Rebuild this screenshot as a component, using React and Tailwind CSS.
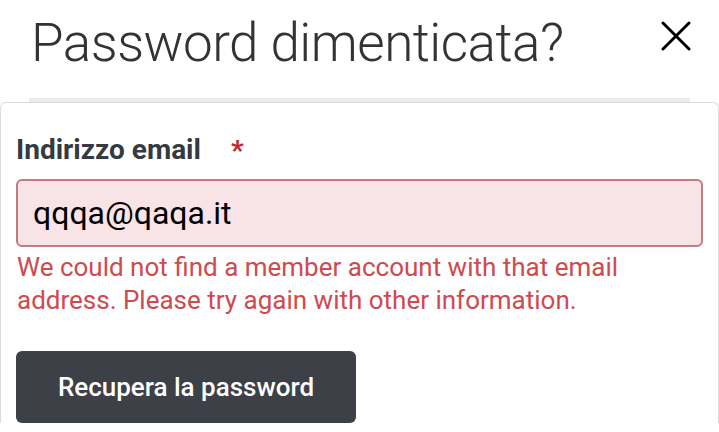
const CloseIcon = () => (
  <svg width="30" height="30" viewBox="0 0 30 30" fill="none" stroke="currentColor" strokeWidth="3" strokeLinecap="round">
    <path d="M2 2 L28 28 M28 2 L2 28" />
  </svg>
);

const App = () => {
  return (
    <div className="h-[432px] w-[719px] overflow-hidden bg-white font-['Roboto',sans-serif]">
      <div className="flex items-start justify-between pl-[31px] pr-[28px] pt-[12px]">
        <h1 className="text-[53px] font-light leading-[62px] tracking-[-0.5px] text-[#333]">Password dimenticata?</h1>
        <button className="mt-[9px] text-black">
          <CloseIcon />
        </button>
      </div>

      <div className="mx-[29px] mt-[24px] h-[4px] bg-[#ececec]" />

      <div className="rounded-t-[6px] border border-b-0 border-[#dcdcdc] px-[15px] pt-[28px]">
        <label className="flex items-center text-[28px] font-bold leading-[36px] text-[#343a40]">
          Indirizzo email
          <span className="ml-[30px] mt-[2px] text-[#c0282d]">*</span>
        </label>

        <div className="mt-[10px] flex h-[68px] items-center rounded-[6px] border-2 border-[#c47a80] bg-[#f8e3e6] px-[15px] text-[32px] text-black">
          qqqa@qaqa.it
        </div>

        <p className="mt-[4px] w-[660px] pl-[1px] text-[26px] leading-[33px] text-[#cf4a4f]">
          We could not find a member account with that email address. Please try again with other information.
        </p>

        <button className="mt-[34px] flex h-[72px] w-[340px] items-center justify-center rounded-[6px] bg-[#3d4047] text-[26px] font-medium text-white">
          Recupera la password
        </button>
      </div>
    </div>
  );
};

export default App;
